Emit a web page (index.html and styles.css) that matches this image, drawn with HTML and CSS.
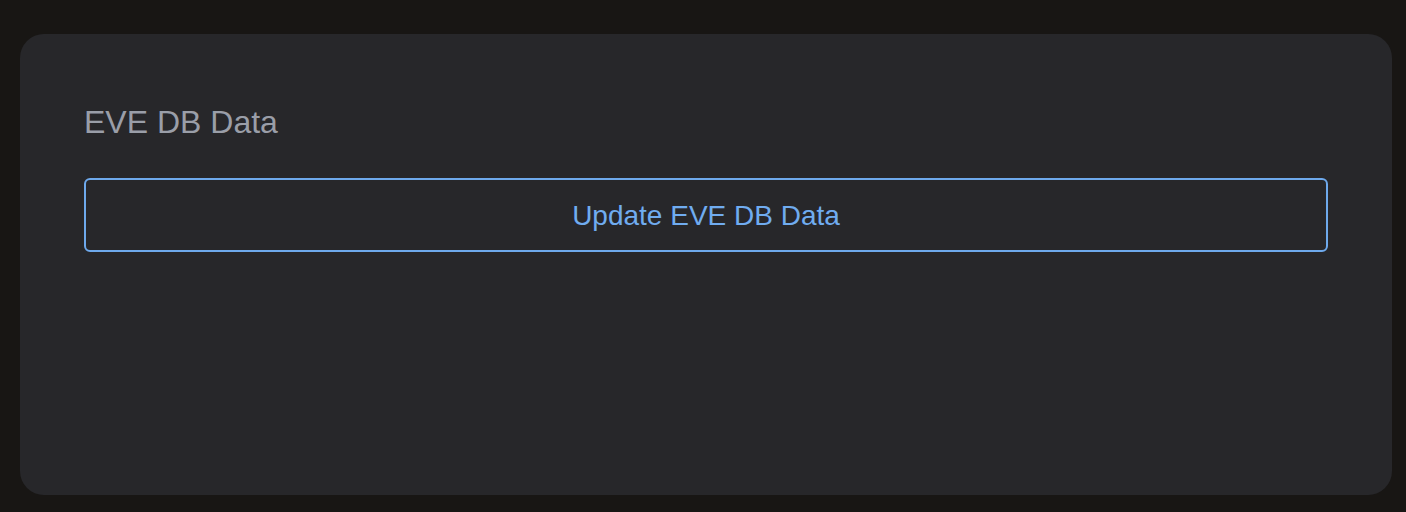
FILE: index.html
```html
<!DOCTYPE html>
<html lang="en">
<head>
<meta charset="utf-8">
<title>EVE DB Data</title>
<link rel="stylesheet" href="styles.css">
</head>
<body>
<main class="page">
  <section class="card">
    <h2 class="card-title">EVE DB Data</h2>
    <button class="btn-outline" type="button">Update EVE DB Data</button>
  </section>
</main>
</body>
</html>
```

FILE: styles.css
```css
html, body {
  margin: 0;
  padding: 0;
  background: #181614;
  font-family: "Liberation Sans", Arial, Helvetica, sans-serif;
}

.page {
  box-sizing: border-box;
  width: 1406px;
  height: 512px;
  padding: 34px 14px 17px 20px;
  display: flex;
}

.card {
  box-sizing: border-box;
  flex: 1;
  background: #27272a;
  border-radius: 24px;
  padding: 68px 64px 0 64px;
  display: flex;
  flex-direction: column;
  gap: 36px;
}

.card-title {
  margin: 0;
  font-size: 32px;
  line-height: 40px;
  font-weight: 400;
  color: #9a9ea8;
}

.btn-outline {
  box-sizing: border-box;
  height: 74px;
  width: 100%;
  background: transparent;
  border: 2px solid #6ea9ec;
  border-radius: 6px;
  color: #70acf0;
  font-family: "Liberation Sans", Arial, Helvetica, sans-serif;
  font-size: 28px;
  line-height: 32px;
  padding: 1px 0 0 0;
  cursor: pointer;
}
```
